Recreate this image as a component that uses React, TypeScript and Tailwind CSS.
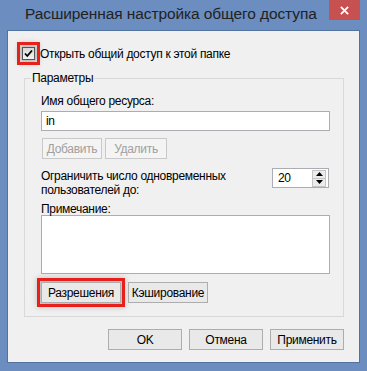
import React from 'react';

const Btn: React.FC<{ label: string; className?: string; disabled?: boolean }> = ({ label, className = '', disabled }) => (
  <button
    className={`flex h-[21px] items-center justify-center whitespace-nowrap border text-[12px] leading-none ${
      disabled ? 'border-[#c9c9c9] bg-[#f4f4f4] text-[#a0a0a0]' : 'border-[#adadad] bg-[#e9e9e9] text-black'
    } ${className}`}
  >
    {label}
  </button>
);

const CheckBox: React.FC = () => (
  <span className="flex h-[13px] w-[13px] items-center justify-center border border-[#555] bg-gradient-to-b from-[#d8d8d8] to-[#f4f4f4] outline-[3px] outline-offset-[2px] outline-[#e8201c] shadow-[0_0_6px_3px_rgba(0,0,0,0.25)]">
    <svg viewBox="0 0 11 11" className="h-[11px] w-[11px]">
      <path d="M2 5.5 L4.3 8 L9 2.5" fill="none" stroke="#000" strokeWidth="1.8" />
    </svg>
  </span>
);

const App: React.FC = () => {
  return (
    <div className="flex h-[371px] w-[367px] flex-col overflow-hidden bg-[#6b8dc0] px-[7px] pb-[8px] font-['Liberation_Sans',Arial,sans-serif] text-[12px] tracking-[-0.3px] text-black">
      {/* Title bar */}
      <div className="flex h-[30px] items-start justify-between">
        <span className="whitespace-nowrap pl-[18px] pt-[5px] text-[15.5px] leading-[18px] tracking-[-0.1px] text-[#222]">Расширенная настройка общего доступа</span>
        <div className="flex h-[20px] w-[31px] shrink-0 items-center justify-center bg-[#c75050]">
          <svg viewBox="0 0 10 10" className="h-[9px] w-[9px]">
            <path d="M1 1 L9 9 M9 1 L1 9" stroke="#fff" strokeWidth="2" />
          </svg>
        </div>
      </div>

      {/* Client area */}
      <div className="flex flex-1 flex-col border border-[#53739f] bg-[#f0f0f0]">
        <div className="ml-[14px] mt-[16px] flex h-[13px] items-center gap-[5px]">
          <CheckBox />
          <span className="whitespace-nowrap leading-[14px]">Открыть общий доступ к этой папке</span>
        </div>

        <fieldset className="ml-[16px] mt-[10px] w-[320px] border border-[#d9d9d9] pb-[13px] pl-[16px]">
          <legend className="ml-[-10px] px-[1px] leading-[16px]">Параметры</legend>
          <div className="mt-[7px] leading-[16px]">Имя общего ресурса:</div>
          <div className="mt-[2px] flex h-[20px] w-[289px] items-center border border-[#abadb3] bg-white pl-[4px] leading-none">in</div>
          <div className="mt-[7px] flex gap-[3px] pl-[1px]">
            <Btn label="Добавить" disabled className="w-[60px]" />
            <Btn label="Удалить" disabled className="w-[62px]" />
          </div>
          <div className="mt-[9px] flex h-[29px] justify-between pr-[14px]">
            <div className="whitespace-nowrap pt-[1px] leading-[14px]">
              Ограничить число одновременных
              <br />
              пользователей до:
            </div>
            <div className="flex h-[20px] w-[57px] items-center border border-[#abadb3] bg-white">
              <span className="flex-1 pl-[5px] leading-none">20</span>
              <div className="mr-[2px] flex h-[17px] w-[14px] flex-col">
                <div className="flex flex-1 items-center justify-center border border-[#c4c4c4] bg-[#ececec]">
                  <svg viewBox="0 0 7 4" className="h-[4px] w-[7px]">
                    <path d="M0 4 L3.5 0 L7 4 Z" fill="#000" />
                  </svg>
                </div>
                <div className="flex flex-1 items-center justify-center border border-t-0 border-[#c4c4c4] bg-[#ececec]">
                  <svg viewBox="0 0 7 4" className="h-[4px] w-[7px]">
                    <path d="M0 0 L3.5 4 L7 0 Z" fill="#000" />
                  </svg>
                </div>
              </div>
            </div>
          </div>
          <div className="mt-[6px] h-[12px] leading-[12px]">Примечание:</div>
          <div className="h-[59px] w-[289px] border border-[#abadb3] bg-white" />
          <div className="mt-[8px] flex gap-[7px]">
            <Btn label="Разрешения" className="w-[80px] border-[#707070] outline-[3px] outline-offset-[1px] outline-[#e8201c] shadow-[0_0_6px_4px_rgba(0,0,0,0.22)]" />
            <Btn label="Кэширование" className="w-[80px]" />
          </div>
        </fieldset>

        <div className="mt-[12px] flex justify-end gap-[7px] pr-[15px]">
          <Btn label="OK" className="w-[74px] border-[#3399ff]" />
          <Btn label="Отмена" className="w-[74px]" />
          <Btn label="Применить" className="w-[74px]" />
        </div>
      </div>
    </div>
  );
};

export default App;
